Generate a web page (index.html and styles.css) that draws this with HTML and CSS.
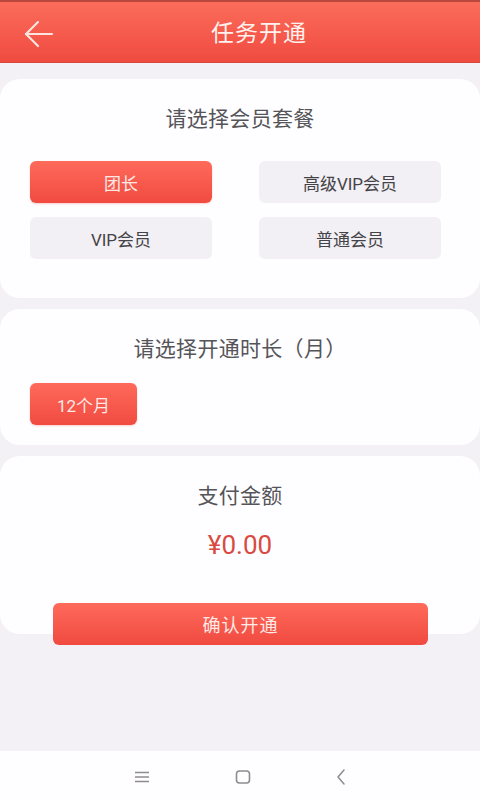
FILE: index.html
```html
<!DOCTYPE html>
<html lang="zh-CN">
<head>
<meta charset="utf-8">
<title>任务开通</title>
<link rel="stylesheet" href="styles.css">
</head>
<body>
<div class="app">
  <header class="topbar">
    <span class="back">
      <svg width="30" height="28" viewBox="0 0 30 28" fill="none" stroke="#fbe3df" stroke-width="2.2" stroke-linecap="round" stroke-linejoin="round"><path d="M2 13 H28"/><path d="M14 1 L2 13 L14 25"/></svg>
    </span>
    <h1 class="title">任务开通</h1>
  </header>

  <main class="content">
    <section class="card card-plan">
      <h2 class="card-title">请选择会员套餐</h2>
      <div class="plan-grid">
        <button class="opt opt-active">团长</button>
        <button class="opt">高级VIP会员</button>
        <button class="opt">VIP会员</button>
        <button class="opt">普通会员</button>
      </div>
    </section>

    <section class="card card-time">
      <h2 class="card-title">请选择开通时长（月）</h2>
      <div class="time-row">
        <button class="opt opt-active opt-small">12个月</button>
      </div>
    </section>

    <section class="card card-pay">
      <h2 class="card-title">支付金额</h2>
      <div class="price">¥0.00</div>
      <button class="confirm">确认开通</button>
    </section>
  </main>

  <nav class="navbar">
    <svg width="16" height="12" viewBox="0 0 16 12" stroke="#8e8c92" stroke-width="1.4"><path d="M1 1.5H15M1 6H15M1 10.5H15"/></svg>
    <svg width="16" height="14" viewBox="0 0 16 14" fill="none" stroke="#8e8c92" stroke-width="1.6"><rect x="1.5" y="1" width="13" height="12" rx="3"/></svg>
    <svg width="10" height="16" viewBox="0 0 10 16" fill="none" stroke="#8e8c92" stroke-width="1.5" stroke-linecap="round" stroke-linejoin="round"><path d="M8 1 L2 8 L8 15"/></svg>
  </nav>
</div>
</body>
</html>
```

FILE: styles.css
```css
* { box-sizing: border-box; }
html, body { margin: 0; padding: 0; }
body {
  width: 480px;
  height: 800px;
  background: #f3f1f5;
  font-family: Roboto, "Noto Sans CJK SC", "Noto Sans", sans-serif;
  overflow: hidden;
}
.app {
  height: 800px;
  display: flex;
  flex-direction: column;
}
.topbar {
  height: 63px;
  flex: none;
  display: flex;
  align-items: center;
  justify-content: center;
  position: relative;
  padding-left: 38px;
  padding-top: 3px;
  background: linear-gradient(180deg, #fb6c5a 0%, #f04b40 100%);
  border-top: 2px solid #b8473f;
  border-bottom: 1px solid #d9463c;
}
.back {
  position: absolute;
  left: 24px;
  top: 19px;
  display: flex;
}
.title {
  margin: 0;
  font-size: 23px;
  font-weight: 400;
  color: #fff1ee;
  letter-spacing: 1px;
  line-height: 30px;
}
.content {
  flex: 1;
  padding-top: 16px;
  display: flex;
  flex-direction: column;
  gap: 11px;
}
.card {
  background: #fefdff;
  border-radius: 20px;
  padding-top: 28px;
}
.card-title {
  margin: 0;
  text-align: center;
  font-size: 21px;
  line-height: 24px;
  font-weight: 400;
  color: #555458;
  letter-spacing: 0.3px;
}
.card-plan { height: 219px; }
.plan-grid {
  margin-top: 30px;
  padding-left: 30px;
  display: grid;
  grid-template-columns: 182px 182px;
  column-gap: 47px;
  row-gap: 14px;
}
.opt {
  height: 42px;
  border: none;
  border-radius: 6px;
  background: #f2f0f4;
  color: #444347;
  font-family: inherit;
  font-size: 17px;
  padding: 0;
}
.opt-active {
  background: linear-gradient(180deg, #fe6a5b 0%, #f14b40 100%);
  color: #fde9e6;
  box-shadow: 0 1px 2px rgba(240, 75, 64, 0.25);
}
.card-time { height: 136px; }
.time-row {
  margin-top: 22px;
  padding-left: 30px;
  display: flex;
}
.opt-small { width: 107px; }
.card-pay {
  height: 178px;
  display: flex;
  flex-direction: column;
}
.price {
  margin-top: 22px;
  text-align: center;
  font-size: 26px;
  line-height: 30px;
  color: #d94a40;
}
.confirm {
  margin: 43px 0 0 53px;
  width: 375px;
  height: 42px;
  flex: none;
  border: none;
  border-radius: 6px;
  background: linear-gradient(180deg, #fe6a5b 0%, #f04a40 100%);
  color: #fde9e6;
  font-family: inherit;
  font-size: 18px;
  letter-spacing: 1px;
}
.navbar {
  height: 49px;
  flex: none;
  background: #fefdff;
  display: flex;
  align-items: center;
  justify-content: center;
  gap: 85px;
  padding-top: 2px;
}
```
